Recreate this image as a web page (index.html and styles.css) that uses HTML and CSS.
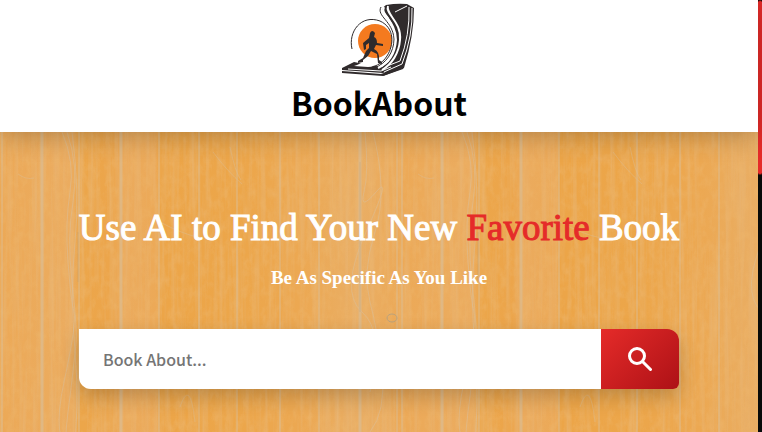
FILE: index.html
```html
<!DOCTYPE html>
<html lang="en">
<head>
<meta charset="utf-8">
<meta name="viewport" content="width=device-width, initial-scale=1">
<title>BookAbout</title>
<link rel="stylesheet" href="styles.css">
</head>
<body>
<div class="page">
  <header class="header">
    <svg class="logo" viewBox="0 0 90 80" aria-hidden="true">
      <circle cx="41" cy="41" r="17" fill="#f47a1f"/>
      <g fill="#302b2c">
        <path d="M52 5Q63 3 73 4L80 8Q80 36 70 68L49 76L56 59Q63 49 61 34Q58 20 51 13Q46 9 52 5Z"/>
        <path d="M8 68L20 62L35 65L48 67L57 60L67 62L65 66L49 73L8 70Z"/>
        <path d="M8 71L47 74L70 66L69 69L49 76L8 73Z"/>
        <path d="M36 33Q38 29 41 33L40 37Q43 38 43 43L49 44V46L42 45L40 49Q46 52 45 60L48 62V64L44 63L43 54L37 51L34 56L29 60V62L24 63L24 61L29 58L32 51L35 48V43L32 45L32 49L30 50L29 43L35 38Z"/>
      </g>
      <g fill="none" stroke="#fff">
        <path d="M54 6C51 14 68 22 66 40C65 53 58 64 48 70" stroke-width="2"/>
        <path d="M61 12L73 6M75 7Q76 35 66 61L53 66M78 8Q79 36 68 64L50 72"/>
        <path d="M14 69L47 71L57 67"/>
      </g>
      <g fill="none" stroke="#302b2c">
        <path d="M18 49C14 32 27 14 46 21C61 28 60 45 53 56C48 64 40 68 32 67" stroke-width="1"/>
        <path d="M47 7C42 16 59 21 60 39C60 52 52 64 40 68" stroke-width="1"/>
      </g>
      <path d="M50 7C46 15 62 21 62 40C61 55 53 64 44 68" fill="none" stroke="#fff" stroke-width="2"/>
      <path d="M23 65Q31 60 36 64Q40 65 42 62Q41 67 34 67L20 66Z" fill="#fff"/>
    </svg>
    <h1 class="brand">BookAbout</h1>
  </header>
  <main class="hero">
    <svg class="wood" aria-hidden="true">
      <defs>
        <linearGradient id="warm">
          <stop offset="0" stop-color="#eca957"/><stop offset=".18" stop-color="#ebac60"/>
          <stop offset=".2" stop-color="#eca64a"/><stop offset=".28" stop-color="#eca54b"/>
          <stop offset=".31" stop-color="#ebab5e"/><stop offset=".39" stop-color="#eca957"/>
          <stop offset=".4" stop-color="#eca548"/><stop offset=".6" stop-color="#eca64a"/>
          <stop offset=".75" stop-color="#eca852"/><stop offset=".9" stop-color="#e9ae65"/>
          <stop offset="1" stop-color="#eca957"/>
        </linearGradient>
        <pattern id="planks" width="400" height="400" patternUnits="userSpaceOnUse">
          <rect width="400" height="400" fill="url(#warm)"/>
        </pattern>
        <pattern id="seams" width="400" height="400" patternUnits="userSpaceOnUse">
          <g fill="none" stroke="#dcbd92">
            <path d="M42 0V400M121 0V400M360 0V400" stroke-width="3" opacity=".7"/>
            <path d="M2 0V400M79 0V400M159 0V400M199 0V400M237 0V400M280 0V400M319 0V400M397 0V400" opacity=".9"/>
            <path d="M62 0Q75 30 70 60T68 130T74 180T64 250T72 320T66 400M67 0Q79 35 73 70T72 150T76 210T68 280T75 340T71 400M72 0Q80 60 75 110T75 220T73 320T75 400" opacity=".6"/>
            <path d="M365 0Q369 40 364 60T376 60T366 100T362 180T370 260M373 0Q388 60 375 100T370 170T382 240T370 300" opacity=".6"/>
            <path d="M175 220Q190 200 197 225T176 245M180 275Q190 245 195 290M160 90Q182 102 201 106M213 20Q228 40 242 52M230 15Q235 40 241 48M18 42Q26 48 34 46" opacity=".45"/>
          </g>
          <path d="M78 100V150M360 30V180" fill="none" stroke="#b79b73" opacity=".4"/>
          <ellipse cx="392" cy="186" rx="5" ry="4" fill="none" stroke="#b9a17b"/>
        </pattern>
        <filter id="grain" x="0" y="0" width="100%" height="100%" color-interpolation-filters="sRGB">
          <feTurbulence type="fractalNoise" baseFrequency=".2 .008" numOctaves="3" seed="7"/>
          <feColorMatrix values="0 0 0 0 .91  0 0 0 0 .73  0 0 0 0 .50  2 0 0 0 -.85"/>
        </filter>
        <filter id="mottle" x="0" y="0" width="100%" height="100%" color-interpolation-filters="sRGB">
          <feTurbulence type="fractalNoise" baseFrequency=".16 .09" numOctaves="4" seed="12"/>
          <feColorMatrix values="0 0 0 0 .93  0 0 0 0 .71  0 0 0 0 .42  2 0 0 0 -.85"/>
        </filter>
      </defs>
      <rect width="100%" height="100%" fill="url(#planks)"/>
      <rect width="100%" height="100%" filter="url(#grain)" opacity=".6"/>
      <rect width="100%" height="100%" filter="url(#mottle)" opacity=".6"/>
      <rect width="100%" height="100%" fill="url(#seams)"/>
    </svg>
    <div class="content">
      <h2 class="title">Use AI to Find Your New <span class="accent">Favorite</span> Book</h2>
      <p class="subtitle">Be As Specific As You Like</p>
      <form class="search">
        <input class="search-input" type="text" placeholder="Book About..." aria-label="Book About">
        <button class="search-button" type="submit" aria-label="Search">
          <svg class="search-icon" viewBox="0 0 24 24" aria-hidden="true"><circle cx="9" cy="9" r="7.500"/><path d="M15 15L22.500 22.500"/></svg>
        </button>
      </form>
    </div>
  </main>
</div>
<div class="scroll-track"><div class="scroll-thumb"></div></div>
</body>
</html>
```
FILE: styles.css
```css
* { box-sizing: border-box; }

body {
  margin: 0;
  min-height: 100vh;
  display: grid;
  grid-template-columns: 1fr 4px;
  font-family: "Noto Sans CJK SC", "Noto Sans", sans-serif;
}

.page {
  display: flex;
  flex-direction: column;
  min-width: 0;
}

.header {
  position: relative;
  z-index: 1;
  display: flex;
  flex-direction: column;
  align-items: center;
  background: #fff;
  box-shadow: 0 4px 24px rgba(0, 0, 0, 0.24);
}

.logo {
  width: 90px;
  height: 80px;
}

.brand {
  margin: 0;
  padding-bottom: 8px;
  font-size: 32px;
  line-height: 44px;
  font-weight: 700;
  color: #000;
}

.hero {
  position: relative;
  flex: 1;
  overflow: hidden;
  padding: 72px 24px 40px;
  background: #eca852;
}

.wood {
  position: absolute;
  inset: 0;
  width: 100%;
  height: 100%;
}

.content {
  position: relative;
  max-width: 600px;
  margin: 0 auto;
  font-family: "Liberation Serif", serif;
  text-align: center;
  color: #fff;
}

.title {
  margin: 0 -24px;
  font-size: 37px;
  line-height: 48px;
  font-weight: 400;
  -webkit-text-stroke: 1px currentColor;
}

.accent { color: #e52b29; }

.subtitle {
  margin: 12px 0 37px;
  font-size: 19px;
  line-height: 28px;
  font-weight: 700;
}

.search {
  display: flex;
  height: 60px;
  border-radius: 0 15px 6px 12px;
  box-shadow: 0 8px 20px rgba(0, 0, 0, 0.2);
}

.search-input {
  flex: 1;
  min-width: 0;
  padding: 0 24px;
  border: 0;
  border-radius: 0 0 0 12px;
  background: #fff;
  font: 500 16px "Noto Sans CJK SC", "Noto Sans", sans-serif;
  color: #222;
}

.search-input::placeholder {
  color: #757575;
  opacity: 1;
}

.search-button {
  display: grid;
  place-items: center;
  width: 78px;
  padding: 0;
  border: 0;
  border-radius: 0 12px 6px 0;
  background: linear-gradient(135deg, #e52b29, #ad1116);
  cursor: pointer;
}

.search-icon {
  width: 24px;
  height: 24px;
  fill: none;
  stroke: #fff;
  stroke-width: 3;
  stroke-linecap: round;
}

.scroll-track { background: #080a09; }

.scroll-thumb {
  height: 175px;
  border: 1px solid #5a1515;
  border-width: 1px 0;
  border-radius: 2px;
  background: #e52b29;
}
```
